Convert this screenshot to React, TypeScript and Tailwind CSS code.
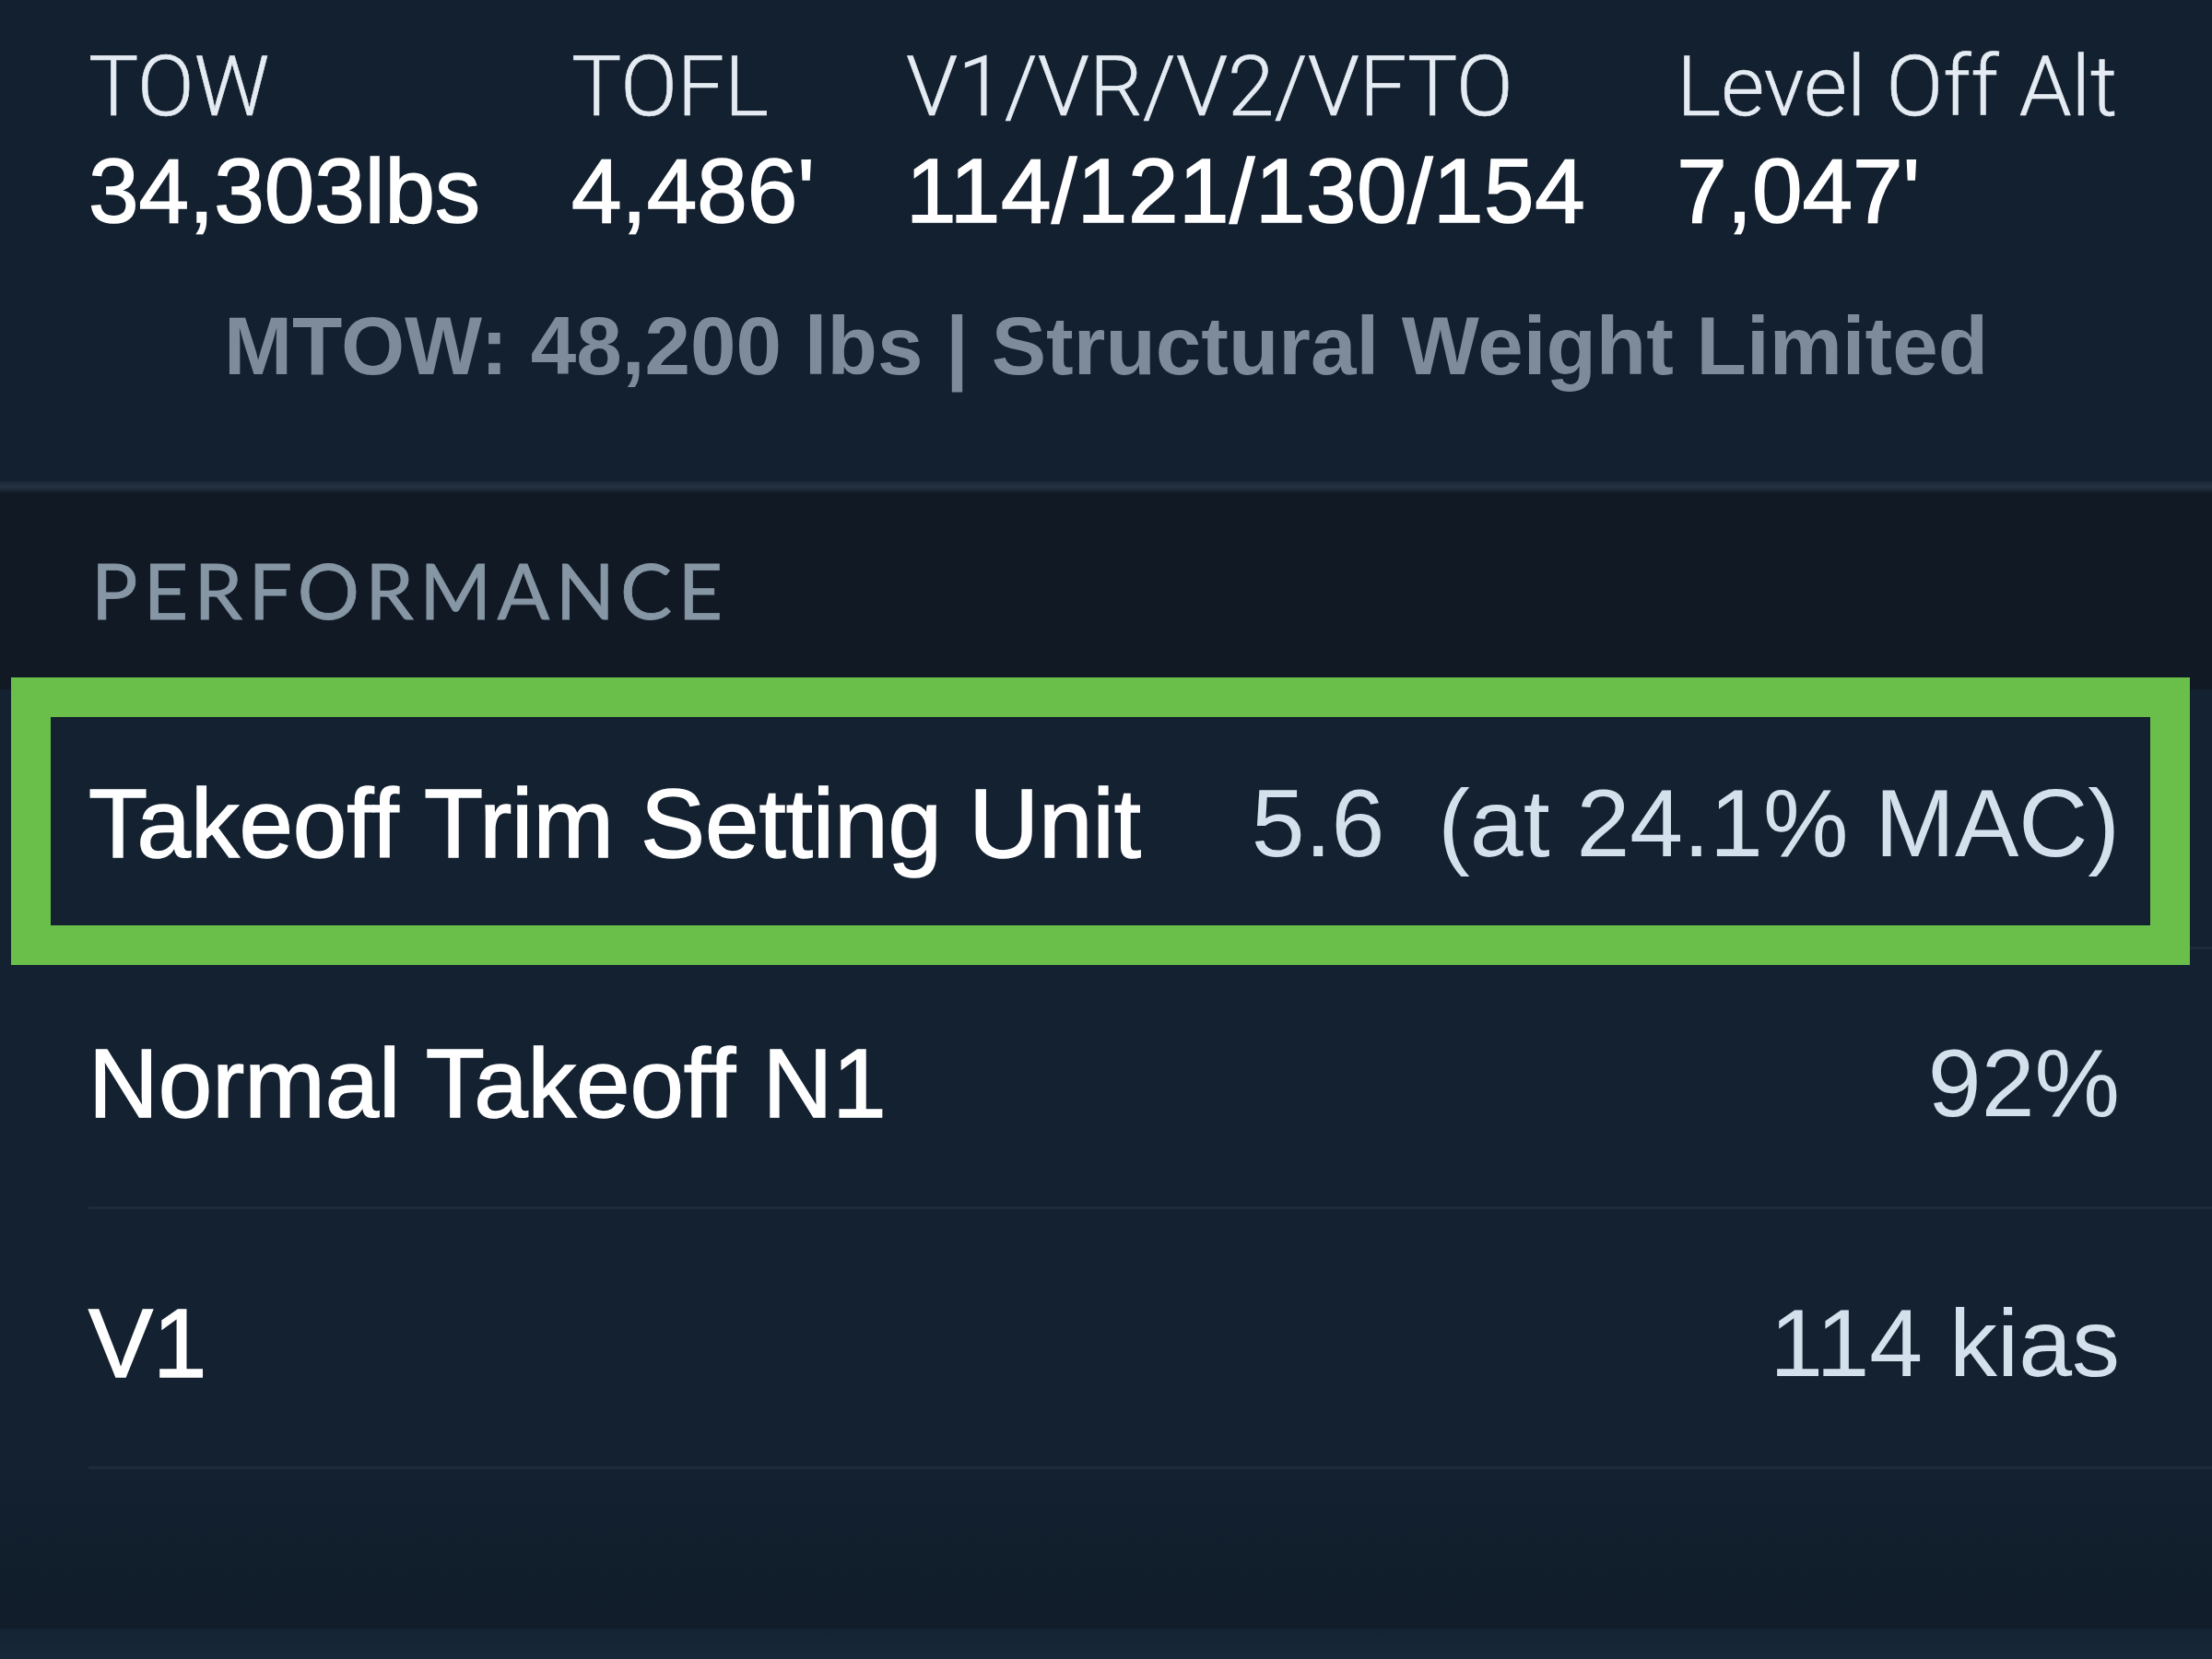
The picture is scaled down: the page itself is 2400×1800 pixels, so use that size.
// Takeoff performance summary panel

const summary = [
  { label: "TOW", value: "34,303lbs", track: "" },
  { label: "TOFL", value: "4,486'", track: "" },
  { label: "V1/VR/V2/VFTO", value: "114/121/130/154", track: "tracking-[0.006em]" },
  { label: "Level Off Alt", value: "7,047'", track: "" },
]

const rows = [
  { label: "Takeoff Trim Setting Unit", value: "5.6  (at 24.1% MAC)", highlight: true },
  { label: "Normal Takeoff N1", value: "92%" },
  { label: "V1", value: "114 kias" },
]

export default function App() {
  return (
    <div className="w-[2400px] h-[1800px] overflow-hidden flex flex-col bg-[#132130] font-['Liberation_Sans',Arial,sans-serif]">
      {/* summary block */}
      <section className="h-[522px] bg-[#13202f] pl-[96px] pt-[49px]">
        <div className="flex gap-[99px]">
          {summary.map((s) => (
            <div key={s.label} className="flex flex-col">
              <span className="font-['Roboto',sans-serif] font-light text-[91px] leading-none text-[#e4ebf2] whitespace-nowrap [-webkit-text-stroke:0.6px_#e4ebf2]">
                {s.label}
              </span>
              <span className={`mt-[18px] text-[98px] leading-none text-white whitespace-nowrap [-webkit-text-stroke:1.5px_white] ${s.track}`}>
                {s.value}
              </span>
            </div>
          ))}
        </div>
        <p className="mt-[75px] -ml-[96px] text-center font-bold text-[89px] leading-none text-[#7d8b9a] whitespace-nowrap">
          MTOW: 48,200 lbs | Structural Weight Limited
        </p>
      </section>

      <div className="h-[13px] bg-gradient-to-b from-[#1a2735] via-[#263343] to-[#111a25]" />

      {/* section header */}
      <div className="h-[213px] bg-[#101924] pl-[99px] pt-[63px]">
        <h2 className="font-['Lato',sans-serif] text-[84px] leading-none tracking-[0.075em] text-[#8796a5] [-webkit-text-stroke:0.8px_#8796a5]">
          PERFORMANCE
        </h2>
      </div>

      {/* performance rows */}
      <div className="flex flex-col pl-[96px]">
        {rows.map((r) => (
          <div key={r.label} className="relative">
            <div className="h-[282px] pt-[11px] pr-[100px] flex items-center justify-between border-b-[3px] border-[#1e2b3a]">
              <span className="text-[105px] leading-none text-white whitespace-nowrap [-webkit-text-stroke:1.5px_white]">
                {r.label}
              </span>
              <span className="text-[104px] leading-none text-[#d4e0ec] whitespace-pre">{r.value}</span>
            </div>
            {r.highlight && (
              <div className="absolute -left-[84px] right-[24px] -top-[13px] -bottom-[17px] border-[43px] border-[#6abf4a] pointer-events-none" />
            )}
          </div>
        ))}
      </div>

      <div className="flex-1 flex flex-col">
        <div className="flex-1 bg-gradient-to-b from-[#132130] to-[#101c29]" />
        <div className="h-[33px] bg-gradient-to-b from-[#142333] to-[#182838]" />
      </div>
    </div>
  )
}
